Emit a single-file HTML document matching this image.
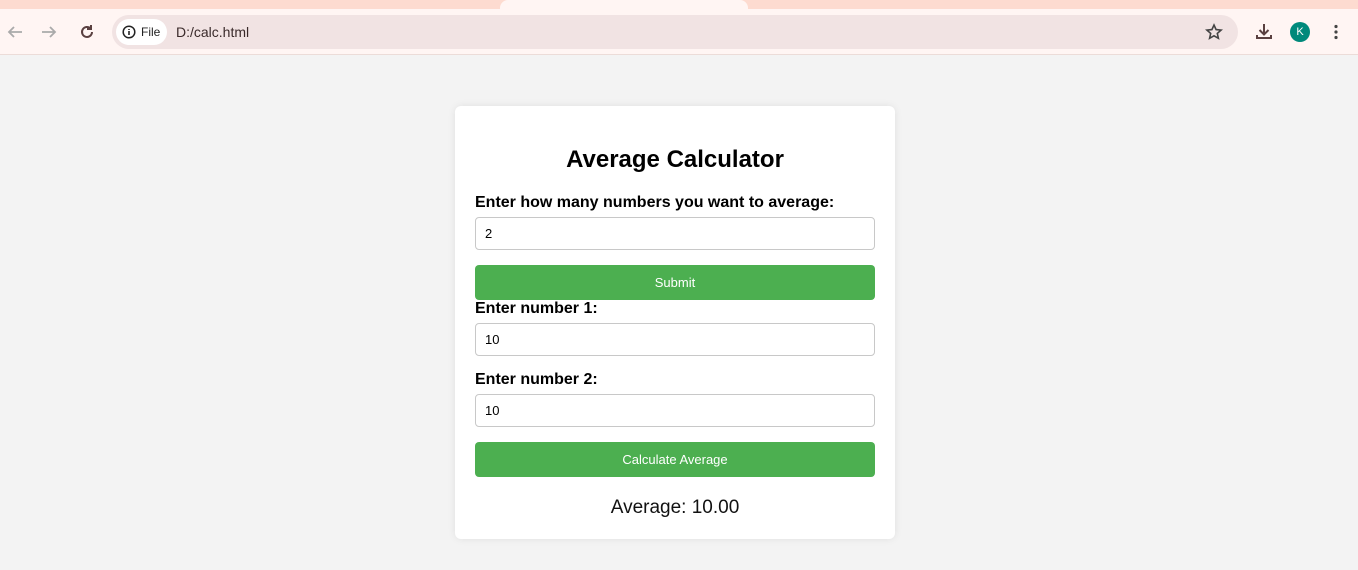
<!DOCTYPE html>
<html><head><style>
*{box-sizing:border-box;margin:0;padding:0}
body{width:1358px;height:570px;overflow:hidden;background:#f3f3f3;font-family:"Liberation Sans",Arial,sans-serif;position:relative}
.top{position:absolute;left:0;top:0;width:1358px;height:9px;background:#fddbd0}
.tab{position:absolute;left:500px;top:0;width:248px;height:9px;background:#fff5f3;border-radius:8px 8px 0 0}
.bar{position:absolute;left:0;top:9px;width:1358px;height:46px;background:#fff5f3;border-bottom:1px solid #ecdcd8}
.addr{position:absolute;left:112px;top:15px;width:1126px;height:34px;background:#f1e3e3;border-radius:17px}
.chip{position:absolute;left:116px;top:19px;width:51px;height:26px;background:#fff;border-radius:13px;font-size:12px;color:#222;line-height:26px;padding-left:25px}
.url{position:absolute;left:176px;top:24px;font-size:14px;color:#3a2a2a}
.ic{position:absolute;color:#555;font-size:18px}
.card{position:absolute;left:455px;top:106px;width:440px;height:433px;background:#fff;border-radius:6px;box-shadow:0 0 8px rgba(0,0,0,.08)}
h1{position:absolute;left:0;width:440px;top:40px;text-align:center;font-size:24px;font-weight:bold;color:#000}
.lbl{position:absolute;left:20px;font-size:16px;font-weight:bold;color:#000}
.inp{position:absolute;left:20px;width:400px;height:33px;border:1px solid #c8c8c8;border-radius:4px;font-size:13px;padding-left:9px;line-height:31px;color:#000}
.btn{position:absolute;left:20px;width:400px;height:35px;background:#4caf50;border-radius:4px;color:#fff;font-size:13px;text-align:center;line-height:35px}
.res{position:absolute;left:0;width:440px;top:391px;text-align:center;font-size:19px;color:#111}
</style></head><body>
<div class="top"></div><div class="tab"></div>
<div class="bar"></div>
<svg style="position:absolute;left:6px;top:24px" width="18" height="16" viewBox="0 0 18 16"><path d="M16 8H3M8 3L3 8l5 5" stroke="#aaa" stroke-width="1.8" fill="none"/></svg>
<svg style="position:absolute;left:40px;top:24px" width="18" height="16" viewBox="0 0 18 16"><path d="M2 8h13M10 3l5 5-5 5" stroke="#aaa" stroke-width="1.8" fill="none"/></svg>
<svg style="position:absolute;left:78px;top:23px" width="18" height="18" viewBox="0 0 18 18"><path d="M14 9a5 5 0 1 1-1.5-3.6M13 2v4h-4" stroke="#5a4040" stroke-width="2" fill="none"/></svg>
<div class="addr"></div>
<div class="chip">File</div>
<svg style="position:absolute;left:122px;top:25px" width="14" height="14" viewBox="0 0 14 14"><circle cx="7" cy="7" r="5.8" stroke="#222" stroke-width="1.5" fill="none"/><path d="M7 6v4M7 4v1" stroke="#222" stroke-width="1.6"/></svg>
<div class="url">D:/calc.html</div>
<svg style="position:absolute;left:1205px;top:23px" width="18" height="18" viewBox="0 0 18 18"><path d="M9 2l2.1 4.6 5 .5-3.8 3.3 1.1 4.9L9 12.8 4.6 15.3l1.1-4.9L1.9 7.1l5-.5z" stroke="#444" stroke-width="1.6" fill="none"/></svg>
<svg style="position:absolute;left:1255px;top:22px" width="18" height="18" viewBox="0 0 18 18"><path d="M9 2v10M4.5 8L9 12.5 13.5 8M2 13v3h14v-3" stroke="#5a4040" stroke-width="2" fill="none"/></svg>
<div style="position:absolute;left:1290px;top:22px;width:20px;height:20px;border-radius:10px;background:#00897b;color:#fff;font-size:11px;text-align:center;line-height:20px">K</div>
<svg style="position:absolute;left:1332px;top:23px" width="8" height="18"><circle cx="4" cy="3.5" r="1.6" fill="#444"/><circle cx="4" cy="9" r="1.6" fill="#444"/><circle cx="4" cy="14.5" r="1.6" fill="#444"/></svg>
<div class="card">
<h1>Average Calculator</h1>
<div class="lbl" style="top:88px">Enter how many numbers you want to average:</div>
<div class="inp" style="top:111px">2</div>
<div class="btn" style="top:159px">Submit</div>
<div class="lbl" style="top:194px">Enter number 1:</div>
<div class="inp" style="top:217px">10</div>
<div class="lbl" style="top:265px">Enter number 2:</div>
<div class="inp" style="top:288px">10</div>
<div class="btn" style="top:336px">Calculate Average</div>
<div class="res">Average: 10.00</div>
</div>
</body></html>
